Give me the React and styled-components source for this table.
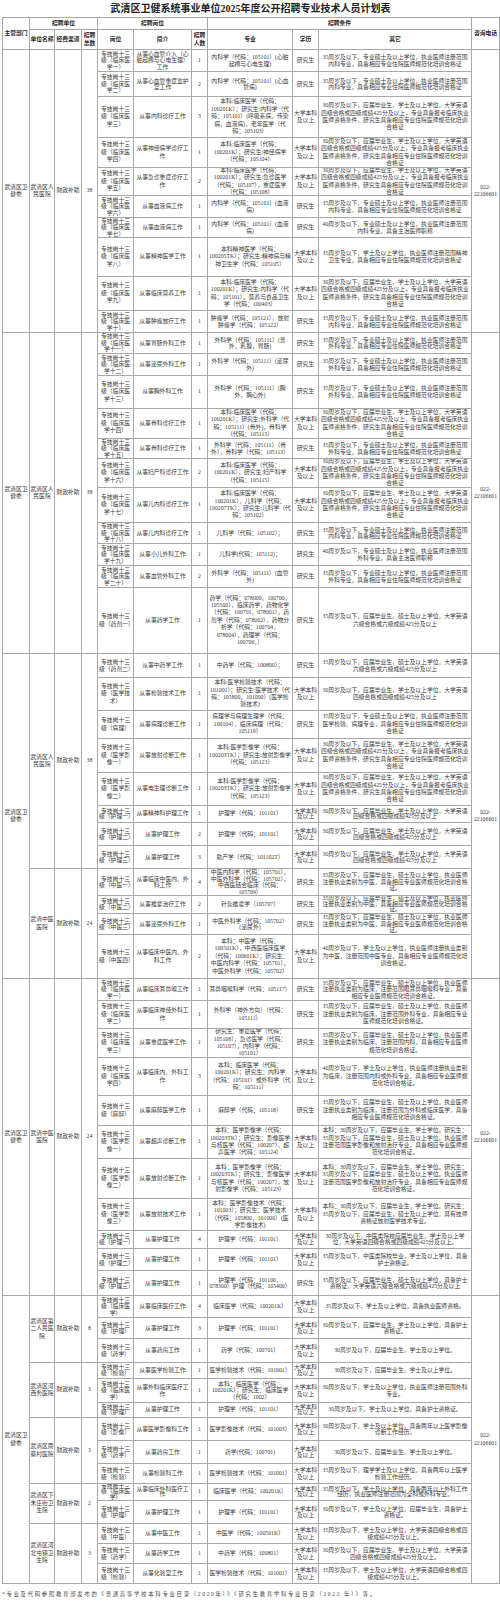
import React from 'react';
import styled, { createGlobalStyle } from 'styled-components';

const GlobalStyle = createGlobalStyle`
  html, body {
    margin: 0;
    padding: 0;
    background: #ffffff;
  }
  body {
    font-family: "Liberation Serif", "Noto Sans CJK SC", serif;
    color: #333;
  }
`;

const Page = styled.div`
  width: 500px;
  height: 1607px;
  box-sizing: border-box;
  padding: 0 1px 0 2px;
  overflow: hidden;
`;

const Title = styled.h1`
  margin: 0;
  height: 17px;
  line-height: 18px;
  text-align: center;
  font-size: 10px;
  font-weight: 700;
  color: #222;
`;

const Grid = styled.div`
  display: grid;
  width: 498px;
  box-sizing: border-box;
  padding: 1px;
  gap: 1px;
  background: #a8a8a8;
  grid-template-columns: ${(p) => p.$cols};
  grid-template-rows: ${(p) => p.$rows};
`;

const Cell = styled.div`
  grid-row: span ${(p) => p.$rs || 1};
  grid-column: span ${(p) => p.$cs || 1};
  background: #ffffff;
  display: flex;
  align-items: center;
  justify-content: center;
  text-align: center;
  overflow: hidden;
  padding: 0 ${(p) => p.$px || 0}px;
  font-size: 5.8px;
  line-height: ${(p) => p.$lh || 7.4}px;
  color: #3a3a3a;
  word-break: normal;
  overflow-wrap: anywhere;
  min-width: 0;
`;

const HeadCell = styled(Cell)`
  font-weight: 700;
  color: #2a2a2a;
`;

const Note = styled.p`
  margin: 6px 0 0 0;
  font-size: 5.4px;
  line-height: 8px;
  letter-spacing: 1.7px;
  color: #444;
`;

// line-to-line widths of the columns
const colW = [27, 25, 27, 16, 36, 58, 16, 85, 26, 153, 28];
// inner side padding of the body columns 岗位..其它
const padX = [1, 1, 0, 1, 0.5, 1.5];

// short rows squeeze their lines, as the printed sheet does
const lineFor = (h) => (h <= 17 ? 5.3 : h <= 18 ? 5.8 : h <= 27 ? 6.5 : 7.4);

const R35n = '35周岁及以下，专业硕士及以上学位，执业医师注册范围内科专业，具备相应专业住院医师规范化培训合格证';
const R35w = '35周岁及以下，专业硕士及以上学位，执业医师注册范围外科专业，具备相应专业住院医师规范化培训合格证';
const R30 = '30周岁及以下，应届毕业生，学士及以上学位，大学英语四级合格或四级成绩425分及以上，专业具备报考临床执业医师资格条件，研究生具备相应专业住院医师规范化培训合格证';
const R30s = '30周岁及以下，应届毕业生，学士及以上学位，大学英语四级合格或四级成绩425分及以上';
const R35y6 = '35周岁及以下，应届毕业生，硕士及以上学位，大学英语六级合格或六级成绩425分及以上';
const RZY = '35周岁及以下，应届毕业生，硕士及以上学位，执业医师注册执业类别为中医，具备相应专业医师规范化培训合格证。';
const RYX = '本科：30周岁及以下，应届毕业生，学士学位。研究生：35周岁及以下，应届毕业生，硕士及以上学位。执业医师注册范围医学影像和放射治疗专业，具备相应专业医师规范化培训合格证。';
const BK = '大学本科及以上';
const YJS = '研究生';
const post = (s) => `专技岗十三级（${s}）`;
const RM = { unit: '武清区人民医院', fund: '财政补助', total: '38' };
const ZY = { unit: '武清中医医院', fund: '财政补助', total: '24' };

// [岗位, 简介, 人数, 专业, 学历, 其它, 行高]
const blocks = [
  [
    {
      ...RM,
      rows: [
        [post('临床医学一'), '从事心血管介入（心脏起搏与心电生理）工作', 1, '内科学（代码：105101）(心脏起搏与心电生理)', YJS, R35n, 22],
        [post('临床医学二'), '从事心血管重症监护室工作', 2, '内科学（代码：105101）(心血管病)', YJS, R35n, 25],
        [post('临床医学三'), '从事内科诊疗工作', 3, '本科:临床医学（代码：100201K）；研究生:内科学（代码：105101）(呼吸系病，传染病，血液病)，老年医学（代码：105103）', BK, R30, 41],
        [post('临床医学四'), '从事神经病学诊疗工作', 1, '本科:临床医学（代码：100201K）；研究生:神经病学（代码：105104）', BK, R30, 30],
        [post('临床医学五'), '从事急诊重症诊疗工作', 2, '本科:临床医学（代码：100201K）；研究生:急诊医学（代码：105107），重症医学（代码：105108）', BK, R30, 28],
        [post('临床医学六'), '从事血液病工作', 1, '内科学（代码：105101）(血液病)', YJS, R35n, 22],
        [post('临床医学七'), '从事血液病工作', 1, '内科学（代码：105101）(血液病)', YJS, '40周岁及以下，专业硕士及以上学位，执业医师注册范围内科专业，具备主治医师职称', 20],
        [post('临床医学八'), '从事精神医学工作', 1, '本科精神医学（代码：100205TK）；研究生:精神病与精神卫生学（代码：105105）', BK, '35周岁及以下，学士及以上学位，执业医师注册范围精神卫生专业，具备相应专业住院医师规范化培训合格证', 39],
        [post('临床医学九'), '从事临床营养工作', 1, '本科:临床医学（代码：100201K）；研究生:内科学（代码：105101），营养与食品卫生学（代码：100403）', BK, R30, 34],
        [post('临床医学十'), '从事肿瘤放疗工作', 1, '肿瘤学（代码：105121），放射肿瘤学（代码：105122）', YJS, R35n, 22],
      ],
    },
  ],
  [
    {
      ...RM,
      rows: [
        [post('临床医学十一'), '从事胃肠外科工作', 1, '外科学（代码：105111）(普外，乳腺，胃肠)', YJS, R35w, 21],
        [post('临床医学十二'), '从事泌尿外科工作', 1, '外科学（代码：105111）(泌尿外)', YJS, R35w, 22],
        [post('临床医学十三'), '从事胸外科工作', 1, '外科学（代码：105111）(胸外，胸心外)', YJS, R35w, 33],
        [post('临床医学十四'), '从事骨科诊疗工作', 1, '本科:临床医学（代码：100201K）；研究生:外科学（代码：105111）(骨外)，骨科学（代码：105113）', BK, R30, 30],
        [post('临床医学十五'), '从事骨科诊疗工作', 1, '外科学（代码：105111）（骨外），骨科学（代码：105113）', YJS, R35w, 20],
        [post('临床医学十六'), '从事妇产科诊疗工作', 2, '本科:临床医学（代码：100201K）；研究生:妇产科学（代码：105115）', BK, R30, 29],
        [post('临床医学十七'), '从事儿内科诊疗工作', 1, '本科:临床医学（代码：100201K），儿科学（代码：100207TK）；研究生:儿科学（代码：105102）', BK, R30, 35],
        [post('临床医学十八'), '从事儿内科诊疗工作', 1, '儿科学（代码：105102）；', YJS, R35n, 21],
        [post('临床医学十九'), '从事小儿外科工作', 1, '儿科学(代码：105112)；', YJS, '40周岁及以下，专业硕士及以上学位，执业医师注册范围外科专业，具备主治医师职称', 22],
        [post('临床医学二十'), '从事血管外科工作', 2, '外科学（代码：105111）(血管外)', YJS, R35w, 22],
        [post('药剂一'), '从事药学工作', 1, '药学（代码：078000，100700，105500），临床药学，药物化学（代码：100701，078001），药剂学（代码：078002），药物分析学（代码：100704，078004），药理学（代码：100706，）', YJS, R35y6, 66],
      ],
    },
  ],
  [
    {
      ...RM,
      rows: [
        [post('药剂二'), '从事中药学工作', 1, '中药学（代码：100800）；', YJS, R35y6, 24],
        [post('医学技术'), '从事检验技术工作', 1, '本科:医学检验技术（代码：101001）；研究生:医学技术（代码：105800，101000）(医学检验技术)', BK, R30s, 33],
        [post('病理'), '从事病理诊断工作', 1, '病理学与病理生理学（代码：100104），临床病理（代码：105119）', YJS, '35周岁及以下，专业硕士及以上学位，执业医师注册范围医学检验、病理专业，具备相应专业住院医师规范化培训合格证', 28],
        [post('医学影像一'), '从事放射诊断工作', 1, '本科:医学影像学（代码：100203TK）；研究生:放射影像学（代码：105123）', BK, R30, 34],
        [post('医学影像二'), '从事电生理诊断工作', 1, '本科:医学影像学（代码：100203TK）；研究生:放射影像学（代码：105123）', BK, R30, 33],
        [post('护理一'), '从事精神科护理工作', 1, '护理学（代码：101101）', BK, R30s, 17],
        [post('护理二'), '从事护理工作', 2, '护理学（代码：101101）', BK, R30s, 23],
        [post('护理三'), '从事护理工作', 3, '助产学（代码：101102T）', BK, R30s, 23],
      ],
    },
    {
      ...ZY,
      rows: [
        [post('中医一'), '从事临床中医内、外科工作', 4, '中医内科学（代码：105701），中医外科学（代码：105702），中西医结合临床（代码：105709）', YJS, RZY, 27],
        [post('中医二'), '从事推拿治疗工作', 2, '针灸推拿学（105707）', YJS, RZY, 18],
        [post('中医三'), '从事泌尿外科工作', 1, '中医外科学（代码：105702）(泌尿外)', YJS, RZY, 21],
        [post('中医四'), '从事临床中医内、外科工作', 2, '本科：中医学（代码：100501K），中西医临床医学（代码：100601K）；研究生：中医内科学（代码：105701），中医外科学（代码：105702）', BK, '40周岁及以下，学士及以上学位，执业医师注册执业类别为中医，注册范围中医专业，具备相应专业医师规范化培训合格证。', 44],
      ],
    },
  ],
  [
    {
      ...ZY,
      rows: [
        [post('临床医学一'), '从事临床耳鼻喉工作', 1, '耳鼻咽喉科学（代码：105117）', YJS, '35周岁及以下，应届毕业生，硕士及以上学位，执业医师注册执业类别为临床，注册范围眼耳鼻咽喉科专业，具备相应专业医师规范化培训合格证。', 22],
        [post('临床医学二'), '从事临床神经外科工作', 1, '外科学（神外方向）（代码：105111）', YJS, '35周岁及以下，应届毕业生，硕士及以上学位，执业医师注册执业类别为临床，注册范围外科专业，具备相应专业医师规范化培训合格证。', 28],
        [post('临床医学三'), '从事重症医学工作', 1, '研究生：重症医学（代码：105108），急诊医学（代码：105107），内科学（代码：105101）', YJS, '35周岁及以下，应届毕业生，硕士及以上学位，执业医师注册执业类别为临床，注册范围内科，具备相应专业医师规范化培训合格证。', 29],
        [post('临床医学四'), '从事临床内、外科工作', 3, '本科：临床医学（代码：100201K）；研究生：内科学（代码：105101）或外科学（代码：105111）', BK, '40周岁及以下，学士及以上学位，执业医师注册执业类别为临床，注册范围内科或外科专业，具备相应专业医师规范化培训合格证。', 38],
        [post('麻醉'), '从事麻醉医学工作', 1, '麻醉学（代码：105118）', YJS, '35周岁及以下，应届毕业生，硕士及以上学位，执业医师注册执业类别为临床，注册范围为外科或临床医学，具备相应专业医师规范化培训合格证。', 30],
        [post('医学影像一'), '从事超声诊断工作', 1, '本科：医学影像学（代码：100203TK）；研究生：影像医学与核医学（代码：100207），超声医学（代码：105124）', BK, RYX, 33],
        [post('医学影像二'), '从事放射诊断工作', 1, '本科：医学影像学（代码：100203TK）；研究生：影像医学与核医学（代码：100207），放射影像学（代码：105123）', BK, RYX, 40],
        [post('医学影像三'), '从事放射技术工作', 1, '本科：医学影像技术（代码：101003）；研究生：医学技术（代码：105800，101000）(医学影像技术)', BK, '本科：30周岁及以下，应届毕业生，学士学位。研究生：35周岁及以下，应届毕业生，硕士及以上学位，具有技师资格证放射医学技术专业。', 32],
        [post('护理一'), '从事护理工作', 4, '护理学（代码：101101）', BK, '30周岁及以下，中医类院校应届毕业生，学士及以上学位，大学英语四级合格或四级成绩425分及以上。', 18],
        [post('护理二'), '从事护理工作', 1, '护理学（代码：101101）', BK, '35周岁及以下，中医类院校毕业，学士及以上学位，具备护士资格证。', 22],
        [post('护理三'), '从事护理工作', 1, '护理学（代码：101100，078300）护理（代码：105400）', YJS, '35周岁及以下，应届毕业生，硕士及以上学位，具备护士资格证，大学英语六级合格或六级成绩425分及以上', 25],
      ],
    },
  ],
  [
    {
      unit: '武清区第二人民医院', fund: '财政补助', total: '8',
      rows: [
        [post('临床医学'), '从事临床医疗工作', 4, '临床医学（代码：100201K）', BK, '35周岁及以下，学士及以上学位，具备执业医师资格。', 22],
        [post('护理'), '从事护理工作', 3, '护理学（代码：101101）', BK, '30周岁及以下，应届毕业生，学士及以上学位，具备护士资格证。', 21],
        [post('药学'), '从事药房工作', 1, '药学（代码：100701）', BK, '30周岁及以下，应届毕业生，学士及以上学位。', 24],
      ],
    },
    {
      unit: '武清区河西务医院', fund: '财政补助', total: '3',
      rows: [
        [post('检验'), '从事医学检验工作', 1, '医学检验技术（代码：101001）', BK, '30周岁及以下，应届毕业生，学士及以上学位。', 16],
        [post('临床医学'), '从事外科临床医疗工作', 1, '本科：临床医学（代码：100201K）；研究生：临床医学（代码：1002）', BK, '30周岁及以下，学士及以上学位，执业医师注册范围外科专业。', 24],
        [post('护理'), '从事护理工作', 1, '护理学（代码：101101）', BK, '30周岁及以下，学士及以上学位，具备护士资格证。', 15],
      ],
    },
    {
      unit: '武清区南蔡村医院', fund: '财政补助', total: '3',
      rows: [
        [post('影像'), '从事医学影像科工作', 1, '医学影像技术（代码：101003）', BK, '30周岁及以下，学士及以上学位，具备两年以上医学影像诊断工作经历。', 23],
        [post('药学'), '从事药房工作', 1, '药学(代码：100701)', BK, '30周岁及以下，应届毕业生，学士及以上学位。', 23],
        [post('检验'), '从事检验科工作', 1, '医学检验技术（代码：101001）', BK, '35周岁及以下，理学学士及以上学位，具备两年以上医学检验工作经历。', 20],
      ],
    },
    {
      unit: '武清区下朱庄街卫生院', fund: '财政补助', total: '2',
      rows: [
        [post('临床医学'), '从事临床外科医疗工作', 1, '临床医学（代码：100201K）', BK, '35周岁及以下，学士及以上学位，具备两年以上外科工作经历，执业医师注册范围为全科或外科专业。', 17],
        [post('护理'), '从事护理工作', 1, '护理学（代码：101101）', BK, '30周岁及以下，学士及以上学位，应届毕业生，具备护士资格证。', 23],
      ],
    },
    {
      unit: '武清区河北屯镇卫生院', fund: '财政补助', total: '3',
      rows: [
        [post('中医'), '从事中医工作', 1, '中医学（代码：100501K）', BK, '35周岁及以下，学士及以上学位，大学英语四级合格或四级成绩425分及以上。', 20],
        [post('药学'), '从事药学工作', 1, '中药学（代码：100801）', BK, '30周岁及以下，应届毕业生，学士及以上学位，大学英语四级合格或四级成绩425分及以上。', 20],
        [post('检验'), '从事化验室工作', 1, '医学检验技术（代码：101001）', BK, '35周岁及以下，学士及以上学位，大学英语四级合格或四级成绩425分及以上。', 20],
      ],
    },
  ],
];

const headHeights = [12, 20];

function buildCells() {
  const cells = [];
  let k = 0;
  blocks.forEach((groups) => {
    const blockRows = groups.reduce((n, g) => n + g.rows.length, 0);
    groups.forEach((g, gi) => {
      g.rows.forEach((r, ri) => {
        const first = gi === 0 && ri === 0;
        const lh = lineFor(r[6]);
        if (first) cells.push(<Cell key={k++} $rs={blockRows}>武清区卫健委</Cell>);
        if (ri === 0) {
          cells.push(<Cell key={k++} $rs={g.rows.length}>{g.unit}</Cell>);
          cells.push(<Cell key={k++} $rs={g.rows.length}>{g.fund}</Cell>);
          cells.push(<Cell key={k++} $rs={g.rows.length}>{g.total}</Cell>);
        }
        r.slice(0, 6).forEach((txt, ci) => {
          cells.push(<Cell key={k++} $px={padX[ci]} $lh={lh}>{txt}</Cell>);
        });
        if (first) cells.push(<Cell key={k++} $rs={blockRows}>022-22106601</Cell>);
      });
    });
  });
  return cells;
}

export default function App() {
  const bodyHeights = blocks.flatMap((gs) => gs.flatMap((g) => g.rows.map((r) => r[6])));
  const rows = [...headHeights, ...bodyHeights].map((h) => `${h - 1}px`).join(' ');
  const cols = colW.map((w) => `${w - 1}px`).join(' ');

  return (
    <Page>
      <GlobalStyle />
      <Title>武清区卫健系统事业单位2025年度公开招聘专业技术人员计划表</Title>
      <Grid $cols={cols} $rows={rows}>
        <HeadCell $rs={2}>主管部门</HeadCell>
        <HeadCell $cs={3}>招聘单位</HeadCell>
        <HeadCell $cs={3}>招聘岗位</HeadCell>
        <HeadCell $cs={3}>招聘条件</HeadCell>
        <HeadCell $rs={2}>咨询电话</HeadCell>
        <HeadCell>单位名称</HeadCell>
        <HeadCell>经费渠道</HeadCell>
        <HeadCell>招聘总数</HeadCell>
        <HeadCell>岗位</HeadCell>
        <HeadCell>简介</HeadCell>
        <HeadCell>招聘人数</HeadCell>
        <HeadCell>专业</HeadCell>
        <HeadCell>学历</HeadCell>
        <HeadCell>其它</HeadCell>
        {buildCells()}
      </Grid>
      <Note>*专业及代码参照教育部发布的《普通高等学校本科专业目录（2020年）》《研究生教育学科专业目录（2022 年）》等。</Note>
    </Page>
  );
}
